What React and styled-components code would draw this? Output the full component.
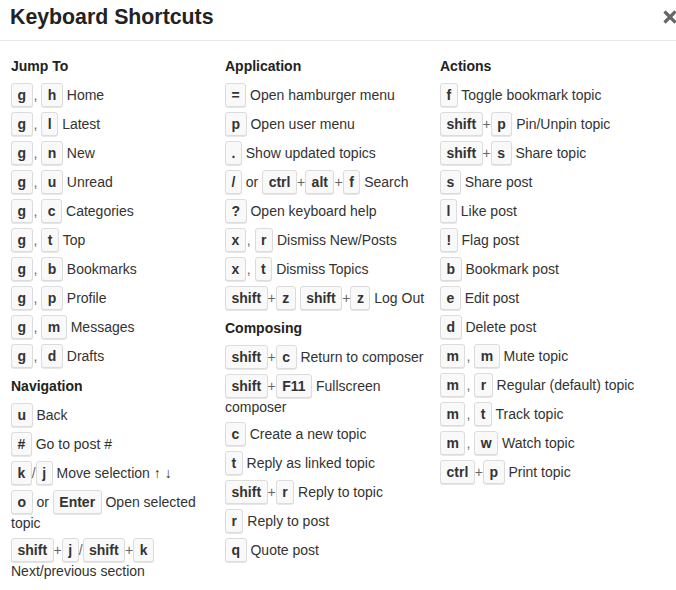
import React from "react";
import styled, { createGlobalStyle } from "styled-components";

const GlobalStyle = createGlobalStyle`
    html, body {
        margin: 0;
        padding: 0;
        background: #ffffff;
    }
    body {
        font-family: "Liberation Sans", Arial, sans-serif;
        color: #333333;
    }
`;

const Modal = styled.div`
    width: 676px;
    height: 590px;
    overflow: hidden;
    background: #ffffff;
`;

const Header = styled.div`
    display: flex;
    align-items: flex-start;
    justify-content: space-between;
    height: 41px;
    box-sizing: border-box;
    padding: 5px 0 0 10px;
    border-bottom: 1px solid #e9e9e9;
`;

const Title = styled.h3`
    margin: 0;
    font-size: 21.3px;
    line-height: 25px;
    font-weight: bold;
    color: #222222;
`;

const Close = styled.button`
    display: flex;
    border: 0;
    padding: 0;
    margin: 4px -2px 0 0;
    background: none;
    cursor: pointer;
`;

const Columns = styled.div`
    display: grid;
    grid-template-columns: 214px 215px 215px;
    padding: 15px 0 0 11px;
`;

const Column = styled.div`
    display: block;
`;

const Heading = styled.h4`
    margin: ${(p) => (p.first ? "0" : "8px")} 0 7px;
    font-size: 14px;
    line-height: 20px;
    font-weight: bold;
    color: #222222;
`;

const List = styled.ul`
    list-style: none;
    margin: 0;
    padding: 0;
`;

const Item = styled.li`
    font-size: 14px;
    line-height: 19px;
    margin-bottom: 5px;
    padding-right: 4px;
`;

const Kbd = styled.kbd`
    display: inline-block;
    box-sizing: border-box;
    height: 24px;
    line-height: 22px;
    padding: 0 5.5px;
    vertical-align: baseline;
    font-family: "Liberation Sans", Arial, sans-serif;
    font-size: 14px;
    font-weight: bold;
    color: #333333;
    background: #f9f9f9;
    border: 1px solid #dcdcdc;
    border-radius: 3px;
    box-shadow: 0 1px 0 #e6e6e6;
`;

const Sep = styled.span`
    color: #666666;
    font-size: 14px;
    margin: ${(p) => p.gap || "0"};
`;

const CloseIcon = () => (
    <svg width="16" height="16" viewBox="0 0 16 16">
        <path
            d="M2.5 2.5 L13.5 13.5 M13.5 2.5 L2.5 13.5"
            stroke="#666666"
            strokeWidth="3.2"
            strokeLinecap="butt"
            fill="none"
        />
    </svg>
);

// tokens starting with "|" are separators, everything else is a key
const sections = [
    [
        {
            title: "Jump To",
            items: [
                [["g", "|,", "h"], "Home"],
                [["g", "|,", "l"], "Latest"],
                [["g", "|,", "n"], "New"],
                [["g", "|,", "u"], "Unread"],
                [["g", "|,", "c"], "Categories"],
                [["g", "|,", "t"], "Top"],
                [["g", "|,", "b"], "Bookmarks"],
                [["g", "|,", "p"], "Profile"],
                [["g", "|,", "m"], "Messages"],
                [["g", "|,", "d"], "Drafts"]
            ]
        },
        {
            title: "Navigation",
            items: [
                [["u"], "Back"],
                [["#"], "Go to post #"],
                [["k", "|/", "j"], "Move selection \u2191 \u2193"],
                [["o", "|or", "Enter"], "Open selected topic"],
                [["shift", "|+", "j", "|/", "shift", "|+", "k"], "Next/previous section"]
            ]
        }
    ],
    [
        {
            title: "Application",
            items: [
                [["="], "Open hamburger menu"],
                [["p"], "Open user menu"],
                [["."], "Show updated topics"],
                [["/", "|or", "ctrl", "|+", "alt", "|+", "f"], "Search"],
                [["?"], "Open keyboard help"],
                [["x", "|,", "r"], "Dismiss New/Posts"],
                [["x", "|,", "t"], "Dismiss Topics"],
                [["shift", "|+", "z", "| ", "shift", "|+", "z"], "Log Out"]
            ]
        },
        {
            title: "Composing",
            items: [
                [["shift", "|+", "c"], "Return to composer"],
                [["shift", "|+", "F11"], "Fullscreen composer"],
                [["c"], "Create a new topic"],
                [["t"], "Reply as linked topic"],
                [["shift", "|+", "r"], "Reply to topic"],
                [["r"], "Reply to post"],
                [["q"], "Quote post"]
            ]
        }
    ],
    [
        {
            title: "Actions",
            items: [
                [["f"], "Toggle bookmark topic"],
                [["shift", "|+", "p"], "Pin/Unpin topic"],
                [["shift", "|+", "s"], "Share topic"],
                [["s"], "Share post"],
                [["l"], "Like post"],
                [["!"], "Flag post"],
                [["b"], "Bookmark post"],
                [["e"], "Edit post"],
                [["d"], "Delete post"],
                [["m", "|,", "m"], "Mute topic"],
                [["m", "|,", "r"], "Regular (default) topic"],
                [["m", "|,", "t"], "Track topic"],
                [["m", "|,", "w"], "Watch topic"],
                [["ctrl", "|+", "p"], "Print topic"]
            ]
        }
    ]
];

function renderToken(token, i) {
    if (!token.startsWith("|")) {
        return <Kbd key={i}>{token}</Kbd>;
    }
    switch (token) {
        case "|,":
            return (
                <Sep key={i} gap="0 0 0 1px">
                    ,{" "}
                </Sep>
            );
        case "|+":
            return <Sep key={i}>+</Sep>;
        case "|/":
            return <Sep key={i}>/</Sep>;
        case "|or":
            return <span key={i}> or </span>;
        default:
            return <span key={i}> </span>;
    }
}

const Shortcut = ({ keys, label }) => (
    <Item>
        {keys.map(renderToken)} {label}
    </Item>
);

export default function App() {
    return (
        <Modal>
            <GlobalStyle />
            <Header>
                <Title>Keyboard Shortcuts</Title>
                <Close aria-label="close">
                    <CloseIcon />
                </Close>
            </Header>
            <Columns>
                {sections.map((column, c) => (
                    <Column key={c}>
                        {column.map((section, s) => (
                            <section key={section.title}>
                                <Heading first={s === 0}>{section.title}</Heading>
                                <List>
                                    {section.items.map(([keys, label]) => (
                                        <Shortcut key={label} keys={keys} label={label} />
                                    ))}
                                </List>
                            </section>
                        ))}
                    </Column>
                ))}
            </Columns>
        </Modal>
    );
}
